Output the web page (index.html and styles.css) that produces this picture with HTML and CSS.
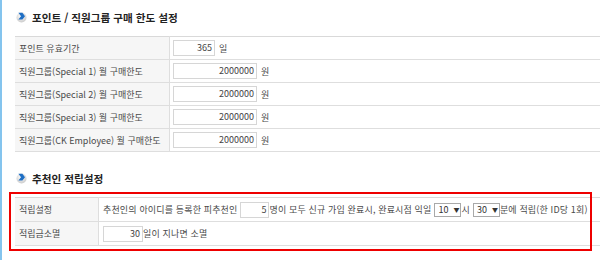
FILE: index.html
```html
<!DOCTYPE html>
<html lang="ko">
<head>
<meta charset="utf-8">
<link rel="stylesheet" href="styles.css">
</head>
<body>
<div class="page">
  <h2 class="title title-first">
    <svg class="bullet" width="11" height="12" viewBox="0 0 11 12"><defs><radialGradient id="g1" cx="0.45" cy="0.35" r="0.7"><stop offset="0" stop-color="#ffffff"/><stop offset="1" stop-color="#c8c8c8"/></radialGradient></defs><circle cx="5.5" cy="6.5" r="5" fill="url(#g1)"/><path d="M2.4 1.8 L6.4 1.8 L9 5.2 L6.4 8.6 L2.4 8.6 L5 5.2 Z" fill="#1f6fc4"/></svg>
    <span>포인트 / 직원그룹 구매 한도 설정</span>
  </h2>
  <table class="form form-limit">
    <tr><th>포인트 유효기간</th><td><div class="cell"><span class="field w42">365</span><span class="unit">일</span></div></td></tr>
    <tr><th>직원그룹(Special 1) 월 구매한도</th><td><div class="cell"><span class="field w84">2000000</span><span class="unit">원</span></div></td></tr>
    <tr><th>직원그룹(Special 2) 월 구매한도</th><td><div class="cell"><span class="field w84">2000000</span><span class="unit">원</span></div></td></tr>
    <tr><th>직원그룹(Special 3) 월 구매한도</th><td><div class="cell"><span class="field w84">2000000</span><span class="unit">원</span></div></td></tr>
    <tr><th>직원그룹(CK Employee) 월 구매한도</th><td><div class="cell"><span class="field w84">2000000</span><span class="unit">원</span></div></td></tr>
  </table>
  <h2 class="title title-second">
    <svg class="bullet" width="11" height="12" viewBox="0 0 11 12"><circle cx="5.5" cy="6.5" r="5" fill="url(#g1)"/><path d="M2.4 1.8 L6.4 1.8 L9 5.2 L6.4 8.6 L2.4 8.6 L5 5.2 Z" fill="#1f6fc4"/></svg>
    <span>추천인 적립설정</span>
  </h2>
  <div class="marked">
    <table class="form form-reward">
      <tr><th>적립설정</th><td><div class="cell"><span>추천인의 아이디를 등록한 피추천인</span><span class="field w28 sp">5</span><span>명이 모두 신규 가입 완료시, 완료시점 익일</span><span class="sel sp">10 <i>▼</i></span><span>시</span><span class="sel sp">30 <i>▼</i></span><span>분에 적립(한 ID당 1회)</span></div></td></tr>
      <tr><th>적립금소멸</th><td><div class="cell"><span class="field w40">30</span><span>일이 지나면 소멸</span></div></td></tr>
    </table>
    <div class="redbox"></div>
  </div>
</div>
</body>
</html>
```
FILE: styles.css
```css
html, body {
  margin: 0;
  padding: 0;
  background: #fff;
}
body {
  font-family: "Noto Sans CJK KR", "Noto Sans", sans-serif;
  color: #4a4a4a;
}
.page {
  border-left: 2px solid #84c4ee;
  min-height: 260px;
  box-sizing: border-box;
  padding-left: 13px;
}
.title {
  margin: 0;
  display: flex;
  align-items: center;
  gap: 5px;
  height: 12px;
  font-size: 10.6px;
  font-weight: bold;
  color: #222;
  padding-left: 1px;
}
.title-first {
  padding-top: 11px;
  margin-bottom: 13px;
}
.title-second {
  padding-top: 20px;
  margin-bottom: 13px;
}
.bullet {
  flex: none;
}
.form {
  width: 100%;
  border-collapse: collapse;
  font-size: 9px;
  border-top: 1px solid #d9d9d9;
}
.form th {
  background: #f6f6f6;
  font-weight: normal;
  text-align: left;
  color: #4a4a4a;
  padding: 0 0 0 4px;
  border-right: 1px solid #dedede;
  border-bottom: 1px solid #dedede;
  white-space: nowrap;
}
.form td {
  border-bottom: 1px solid #dedede;
  white-space: nowrap;
  color: #4a4a4a;
}
.cell {
  display: flex;
  align-items: center;
}
.unit {
  margin-left: 4px;
}
.sp {
  margin-left: 3px;
}
.form-limit th { width: 150px; }
.form-limit td { height: 22px; padding: 0 0 0 3px; }
.form-reward th { width: 79px; }
.form-reward td { height: 23px; padding: 0 0 0 4px; letter-spacing: 0.15px; }
.field {
  display: inline-block;
  box-sizing: border-box;
  height: 16px;
  line-height: 14px;
  border: 1px solid #d6d6d6;
  text-align: right;
  padding-right: 2px;
  color: #444;
  background: #fff;
  letter-spacing: 0;
}
.w42 { width: 42px; }
.w84 { width: 84px; }
.w28 { width: 29px; }
.w40 { width: 40px; }
.sel {
  display: inline-block;
  box-sizing: border-box;
  height: 14px;
  line-height: 12px;
  width: 27px;
  border: 1px solid #a9a9a9;
  padding-left: 3px;
  color: #333;
  background: #fff;
  letter-spacing: 0;
}
.sel i {
  font-style: normal;
  font-size: 6px;
  margin-left: 3px;
  vertical-align: 1px;
}
.marked {
  position: relative;
}
.redbox {
  position: absolute;
  left: -6px;
  top: -5px;
  right: 8px;
  bottom: -5px;
  border: 2px solid #ee0000;
  pointer-events: none;
}
```
